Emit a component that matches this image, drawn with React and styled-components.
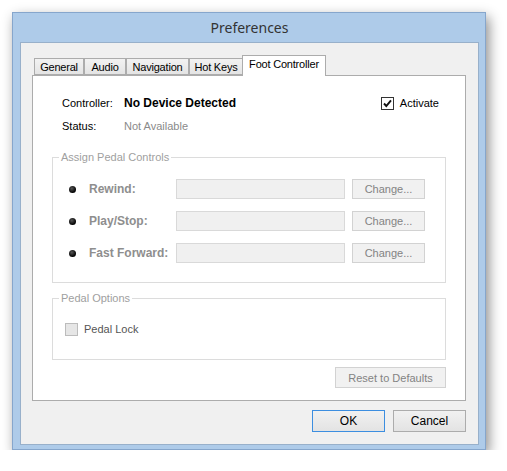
import styled, { createGlobalStyle } from "styled-components";

const Global = createGlobalStyle`
body {
  margin: 0;
  background: #ffffff;
  font-family: "Liberation Sans", Arial, sans-serif;
}
`

const Page = styled.div`
padding: 12px 0 0 12px;
`
const Window = styled.div`
box-sizing: border-box;
width: 474px;
height: 438px;
display: flex;
flex-direction: column;
background: #aecbe9;
border: 1px solid #86a6cc;
padding: 0 6px 6px 7px;
box-shadow: 3px 5px 12px rgba(0, 0, 0, 0.45);
`
const TitleBar = styled.div`
height: 29px;
line-height: 30px;
text-align: center;
font-family: "Noto Sans", "Open Sans", sans-serif;
font-size: 14px;
color: #333;
`
const Client = styled.div`
flex: 1;
box-sizing: border-box;
display: flex;
flex-direction: column;
background: #f0f0f0;
border: 1px solid #98b0ca;
padding: 12px 12px 12px 11px;
`
const TabStrip = styled.div`
display: flex;
align-items: flex-end;
padding-left: 2px;
height: 20px;
position: relative;
z-index: 1;
`
const Tab = styled.div`
box-sizing: border-box;
width: ${p => p.$w};
height: ${p => p.$active ? "21px" : "17px"};
margin-left: ${p => p.$active ? "-1px" : "0"};
margin-bottom: ${p => p.$active ? "-1px" : "0"};
line-height: ${p => p.$active ? "17px" : "16px"};
text-align: center;
font-size: 11px;
letter-spacing: -0.2px;
color: #000;
white-space: nowrap;
background: ${p => p.$active ? "#ffffff" : "linear-gradient(#f2f2f2, #e4e4e4)"};
border: 1px solid #acacac;
border-bottom: ${p => p.$active ? "none" : "1px solid #acacac"};
& + & {
  border-left: ${p => p.$active ? "1px solid #acacac" : "none"};
}
`
const Panel = styled.div`
box-sizing: border-box;
height: 326px;
background: #ffffff;
border: 1px solid #acacac;
padding: 18px 19px 0 19px;
display: flex;
flex-direction: column;
`
const InfoRow = styled.div`
display: flex;
align-items: center;
height: 18px;
padding-left: 10px;
margin-bottom: 5px;
font-size: 11px;
`
const InfoLabel = styled.span`
width: 62px;
color: #000;
`
const InfoValue = styled.span`
flex: 1;
color: ${p => p.$bold ? "#000" : "#8a8a8a"};
font-weight: ${p => p.$bold ? "bold" : "normal"};
font-size: ${p => p.$bold ? "12px" : "11px"};
`
const CheckLabel = styled.label`
display: flex;
align-items: center;
gap: 6px;
height: 18px;
font-size: 11px;
color: ${p => p.$disabled ? "#555" : "#000"};
margin-right: ${p => p.$disabled ? "0" : "7px"};
`
const Box = styled.span`
box-sizing: border-box;
width: 13px;
height: 13px;
display: inline-flex;
align-items: center;
justify-content: center;
border: 1px solid ${p => p.$disabled ? "#bcbcbc" : "#333"};
background: ${p => p.$disabled ? "#e6e6e6" : "#fff"};
`
const Group = styled.div`
position: relative;
border: 1px solid #dcdcdc;
padding: ${p => p.$pad};
margin-top: ${p => p.$top};
`
const Legend = styled.span`
position: absolute;
top: -8px;
left: 6px;
padding: 0 2px;
background: #fff;
font-size: 11px;
line-height: 14px;
color: #a0a0a0;
`
const PedalRow = styled.div`
display: flex;
align-items: center;
height: 20px;
& + & {
  margin-top: 12px;
}
`
const Bullet = styled.span`
width: 7px;
height: 7px;
border-radius: 50%;
background: radial-gradient(circle at 40% 35%, #555, #000 70%);
margin-right: 13px;
`
const PedalName = styled.span`
width: 87px;
font-size: 12px;
font-weight: bold;
color: #8e8e8e;
text-shadow: 1px 1px 0 #fff;
`
const Field = styled.div`
box-sizing: border-box;
width: 169px;
height: 20px;
background: #f0f0f0;
border: 1px solid #d9d9d9;
`
const Button = styled.button`
box-sizing: border-box;
width: ${p => p.$w};
height: ${p => p.$h || "20px"};
margin-left: ${p => p.$gap || "0"};
padding: 0;
font-family: "Liberation Sans", Arial, sans-serif;
font-size: ${p => p.$disabled ? "11px" : "12px"};
color: ${p => p.$disabled ? "#838383" : "#000"};
background: ${p => p.$disabled ? "#f1f1f1" : "linear-gradient(#f1f1f1, #e3e3e3)"};
border: 1px solid ${p => p.$primary ? "#3c8ee0" : p.$disabled ? "#d2d2d2" : "#acacac"};
`
const PanelFooter = styled.div`
display: flex;
justify-content: flex-end;
margin-top: 7px;
`
const DialogButtons = styled.div`
display: flex;
justify-content: flex-end;
gap: 8px;
margin-top: 9px;
`

function Check() {
    return (
        <svg width="11" height="11" viewBox="0 0 11 11">
            <path d="M2 5.5 L4.3 8 L9 2.3" fill="none" stroke="#111" strokeWidth="1.9" />
        </svg>
    )
}

export default function App() {
    const tabs = [
        ["General", "50px"],
        ["Audio", "42px"],
        ["Navigation", "63px"],
        ["Hot Keys", "54px"],
        ["Foot Controller", "84px"],
    ]
    const pedals = ["Rewind:", "Play/Stop:", "Fast Forward:"]

    return (
        <Page>
            <Global />
            <Window>
                <TitleBar>Preferences</TitleBar>
                <Client>
                    <TabStrip>
                        {tabs.map(([t, w]) => (
                            <Tab key={t} $w={w} $active={t === "Foot Controller"}>{t}</Tab>
                        ))}
                    </TabStrip>
                    <Panel>
                        <InfoRow>
                            <InfoLabel>Controller:</InfoLabel>
                            <InfoValue $bold>No Device Detected</InfoValue>
                            <CheckLabel>
                                <Box><Check /></Box>
                                Activate
                            </CheckLabel>
                        </InfoRow>
                        <InfoRow>
                            <InfoLabel>Status:</InfoLabel>
                            <InfoValue>Not Available</InfoValue>
                        </InfoRow>
                        <Group $top="17px" $pad="21px 0 19px 16px">
                            <Legend>Assign Pedal Controls</Legend>
                            {pedals.map(p => (
                                <PedalRow key={p}>
                                    <Bullet />
                                    <PedalName>{p}</PedalName>
                                    <Field />
                                    <Button $disabled $w="73px" $gap="7px">Change...</Button>
                                </PedalRow>
                            ))}
                        </Group>
                        <Group $top="15px" $pad="21px 0 21px 12px">
                            <Legend>Pedal Options</Legend>
                            <CheckLabel $disabled>
                                <Box $disabled />
                                Pedal Lock
                            </CheckLabel>
                        </Group>
                        <PanelFooter>
                            <Button $disabled $w="111px" $h="21px">Reset to Defaults</Button>
                        </PanelFooter>
                    </Panel>
                    <DialogButtons>
                        <Button $primary $w="73px" $h="22px">OK</Button>
                        <Button $w="73px" $h="22px">Cancel</Button>
                    </DialogButtons>
                </Client>
            </Window>
        </Page>
    )
}
